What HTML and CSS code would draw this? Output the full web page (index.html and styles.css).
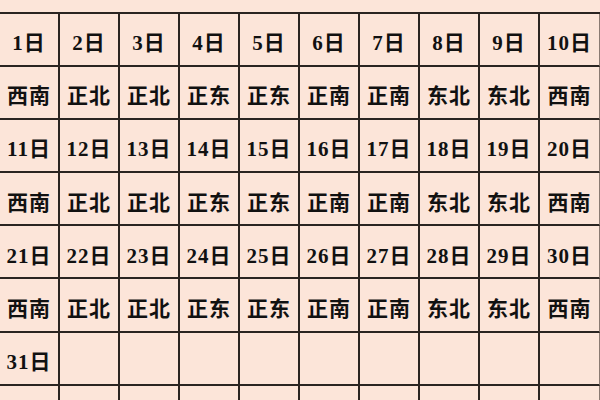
FILE: index.html
```html
<!DOCTYPE html>
<html lang="zh">
<head>
<meta charset="utf-8">
<title>方位表</title>
<link rel="stylesheet" href="styles.css">
</head>
<body>
<div class="grid">
  <div class="cell top"></div>

  <div class="cell">1日</div><div class="cell">2日</div><div class="cell">3日</div><div class="cell">4日</div><div class="cell">5日</div><div class="cell">6日</div><div class="cell">7日</div><div class="cell">8日</div><div class="cell">9日</div><div class="cell">10日</div>
  <div class="cell">西南</div><div class="cell">正北</div><div class="cell">正北</div><div class="cell">正东</div><div class="cell">正东</div><div class="cell">正南</div><div class="cell">正南</div><div class="cell">东北</div><div class="cell">东北</div><div class="cell">西南</div>

  <div class="cell">11日</div><div class="cell">12日</div><div class="cell">13日</div><div class="cell">14日</div><div class="cell">15日</div><div class="cell">16日</div><div class="cell">17日</div><div class="cell">18日</div><div class="cell">19日</div><div class="cell">20日</div>
  <div class="cell">西南</div><div class="cell">正北</div><div class="cell">正北</div><div class="cell">正东</div><div class="cell">正东</div><div class="cell">正南</div><div class="cell">正南</div><div class="cell">东北</div><div class="cell">东北</div><div class="cell">西南</div>

  <div class="cell">21日</div><div class="cell">22日</div><div class="cell">23日</div><div class="cell">24日</div><div class="cell">25日</div><div class="cell">26日</div><div class="cell">27日</div><div class="cell">28日</div><div class="cell">29日</div><div class="cell">30日</div>
  <div class="cell">西南</div><div class="cell">正北</div><div class="cell">正北</div><div class="cell">正东</div><div class="cell">正东</div><div class="cell">正南</div><div class="cell">正南</div><div class="cell">东北</div><div class="cell">东北</div><div class="cell">西南</div>

  <div class="cell">31日</div><div class="cell"></div><div class="cell"></div><div class="cell"></div><div class="cell"></div><div class="cell"></div><div class="cell"></div><div class="cell"></div><div class="cell"></div><div class="cell"></div>

  <div class="cell last"></div><div class="cell last"></div><div class="cell last"></div><div class="cell last"></div><div class="cell last"></div><div class="cell last"></div><div class="cell last"></div><div class="cell last"></div><div class="cell last"></div><div class="cell last"></div>
</div>
</body>
</html>
```

FILE: styles.css
```css
html, body {
  margin: 0;
  padding: 0;
  width: 600px;
  height: 400px;
  overflow: hidden;
  background: #fce5d9;
}

.grid {
  display: grid;
  grid-template-columns: repeat(10, 60px);
  grid-template-rows: 13.5px repeat(7, 53.2px) 14px;
  width: 600px;
  background: #fce5d9;
  font-family: "Liberation Serif", "Noto Sans CJK SC", serif;
  font-weight: bold;
  font-size: 21px;
  color: #111;
}

.cell {
  box-sizing: border-box;
  border-right: 2px solid #2a2421;
  border-bottom: 2px solid #2a2421;
  display: flex;
  align-items: center;
  justify-content: center;
  padding-top: 4px;
  letter-spacing: 1px;
  white-space: nowrap;
}

.cell:nth-child(10n+1) {
  border-right: 1px solid #8a7a72;
}

.cell.top {
  grid-column: 1 / -1;
  border-right: none;
  padding-top: 0;
}

.cell.last {
  border-bottom: none;
}
```
